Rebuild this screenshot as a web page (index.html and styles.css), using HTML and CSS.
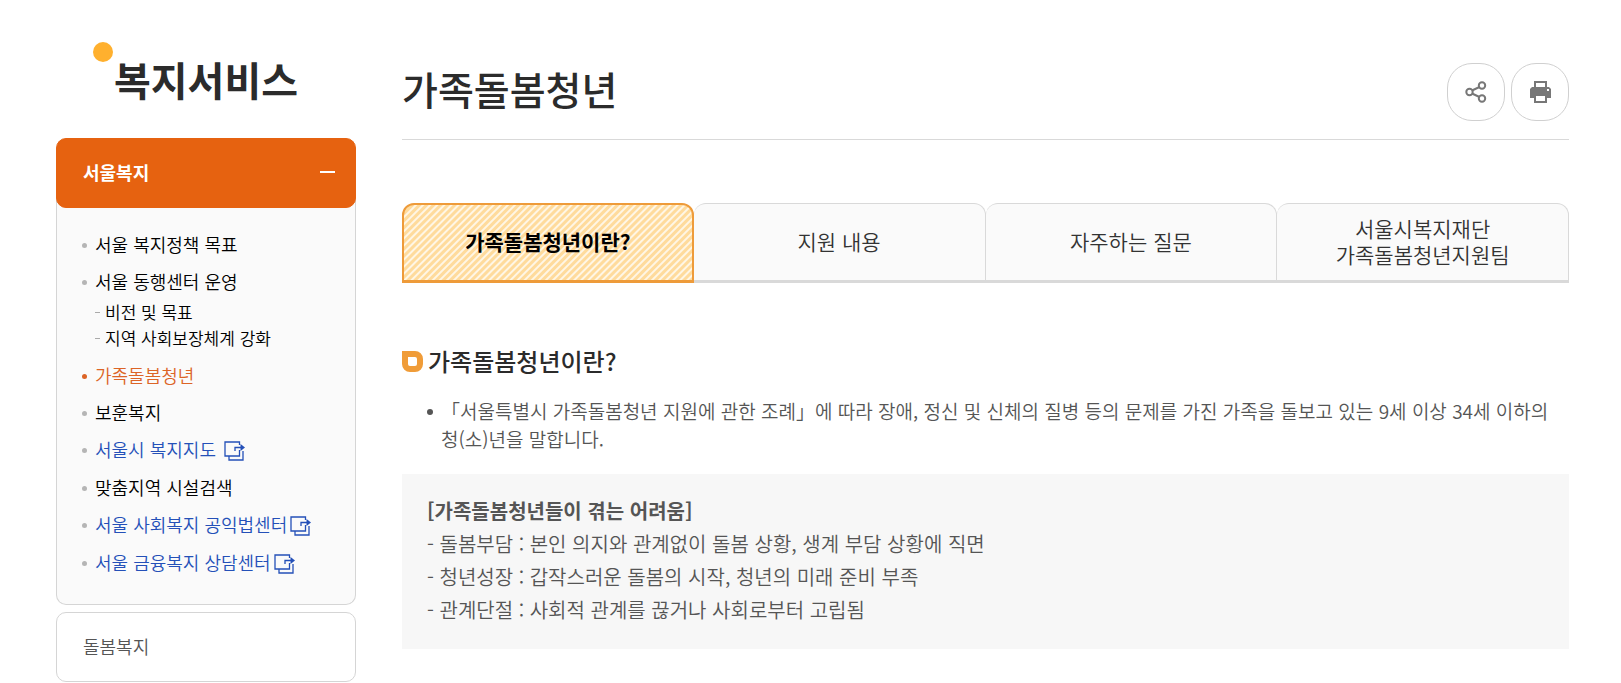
FILE: index.html
```
<!DOCTYPE html>
<html lang="ko">
<head>
    <meta charset="UTF-8">
    <meta name="viewport" content="width=device-width, initial-scale=1.0">
    <title>가족돌봄청년 - 복지서비스</title>
    <link rel="stylesheet" href="styles.css">
</head>
<body>
    <svg class="sprite" width="0" height="0" aria-hidden="true">
        <symbol id="icon-link" viewBox="0 0 21 20">
            <path d="M15.500 4V1H1v14h14.500V9M5 15v4h14v-9M11 10V6.500H18" fill="none" stroke="currentColor" stroke-width="1.300"/>
            <path d="M16.500 3L21 6.500L16.500 10z" fill="currentColor"/>
        </symbol>
    </svg>
    <div class="wrap">
        <aside class="side">
            <h2 class="side-title"><span>복지서비스</span></h2>
            <nav class="lnb">
                <button type="button" class="lnb-btn on" aria-expanded="true">서울복지</button>
                <ul class="lnb-list">
                    <li><a href="#">서울 복지정책 목표</a></li>
                    <li>
                        <a href="#">서울 동행센터 운영</a>
                        <ul class="lnb-sub">
                            <li><a href="#">비전 및 목표</a></li>
                            <li><a href="#">지역 사회보장체계 강화</a></li>
                        </ul>
                    </li>
                    <li class="current"><a href="#">가족돌봄청년</a></li>
                    <li><a href="#">보훈복지</a></li>
                    <li><a href="#" class="blank">서울시 복지지도 <svg class="ico-link"><use href="#icon-link"/></svg></a></li>
                    <li><a href="#">맞춤지역 시설검색</a></li>
                    <li><a href="#" class="blank">서울 사회복지 공익법센터<svg class="ico-link"><use href="#icon-link"/></svg></a></li>
                    <li><a href="#" class="blank">서울 금융복지 상담센터<svg class="ico-link"><use href="#icon-link"/></svg></a></li>
                </ul>
                <button type="button" class="lnb-btn">돌봄복지</button>
            </nav>
        </aside>

        <main class="content">
            <header class="content-head">
                <h1>가족돌봄청년</h1>
                <div class="tools">
                    <button type="button" aria-label="공유">
                        <svg width="22" height="22" viewBox="0 0 22 22" fill="none" stroke="#777" stroke-width="2">
                            <path d="M7 9.500L14.500 6M7 12.500L14.500 16"/>
                            <circle cx="4.500" cy="11" r="3.200"/>
                            <circle cx="17" cy="4.500" r="3.200"/>
                            <circle cx="17" cy="17.500" r="3.200"/>
                        </svg>
                    </button>
                    <button type="button" aria-label="인쇄">
                        <svg width="22" height="22" viewBox="0 0 22 22">
                            <path d="M5 0h13v6h2l2 2v9h-4v5H5v-5H1V8l2-2h2z" fill="#777"/>
                            <path d="M7 2h9v4H7zM7 15h9v5H7zM18 8h2v2h-2z" fill="#fff"/>
                        </svg>
                    </button>
                </div>
            </header>

            <ul class="tabs">
                <li class="on"><a href="#">가족돌봄청년이란?</a></li>
                <li><a href="#">지원 내용</a></li>
                <li><a href="#">자주하는 질문</a></li>
                <li><a href="#">서울시복지재단<br>가족돌봄청년지원팀</a></li>
            </ul>

            <h3 class="tit">가족돌봄청년이란?</h3>
            <ul class="bullet">
                <li>「서울특별시 가족돌봄청년 지원에 관한 조례」에 따라 장애, 정신 및 신체의 질병 등의 문제를 가진 가족을 돌보고 있는 9세 이상 34세 이하의 청(소)년을 말합니다.</li>
            </ul>
            <div class="gray-box">
                <strong>[가족돌봄청년들이 겪는 어려움]</strong>
                <p>- 돌봄부담 : 본인 의지와 관계없이 돌봄 상황, 생계 부담 상황에 직면</p>
                <p>- 청년성장 : 갑작스러운 돌봄의 시작, 청년의 미래 준비 부족</p>
                <p>- 관계단절 : 사회적 관계를 끊거나 사회로부터 고립됨</p>
            </div>
        </main>
    </div>
</body>
</html>
```
FILE: styles.css
```
*, *::before, *::after {
    box-sizing: border-box;
}
body, h1, h2, h3, p, ul {
    margin: 0;
    padding: 0;
}
body {
    font-family: "Noto Sans CJK KR", sans-serif;
    font-size: 19px;
    font-weight: 350;
    color: #555;
    background: #fff;
}
ul {
    list-style: none;
}
a {
    color: inherit;
    text-decoration: none;
}
button {
    font: inherit;
    cursor: pointer;
}
.sprite {
    display: block;
}
.wrap {
    display: flex;
    gap: 46px;
    padding: 0 52px 0 56px;
}

/* 왼쪽 메뉴 */
.side {
    flex: 0 0 300px;
}
.side-title {
    height: 138px;
    padding: 49px 0 0 58px;
    font-size: 40px;
    line-height: 60px;
    font-weight: 700;
    color: #2b2b2b;
}
.side-title span {
    position: relative;
}
.side-title span::before {
    content: "";
    position: absolute;
    top: -8px;
    left: -21px;
    width: 20px;
    height: 20px;
    border-radius: 50%;
    background: #ffb02e;
}
.lnb-btn {
    display: flex;
    justify-content: space-between;
    align-items: center;
    width: 100%;
    height: 70px;
    padding: 0 20px 2px 26px;
    border: 1px solid #d5d5d5;
    border-radius: 10px;
    background: #fff;
    color: #555;
    font-size: 18px;
}
.lnb-btn.on {
    position: relative;
    border-color: #e66210;
    background: #e66210;
    color: #fff;
    font-weight: 700;
}
.lnb-btn.on::after {
    content: "";
    width: 15px;
    height: 2px;
    background: #fff;
}
.lnb-list {
    margin: -10px 0 7px;
    padding: 28px 12px 22px 25px;
    border: 1px solid #d5d5d5;
    border-top: 0;
    border-radius: 0 0 10px 10px;
    background: #fafafa;
    color: #000;
    font-size: 18px;
    line-height: 25px;
}
.lnb-list > li {
    position: relative;
    padding: 6px 0 6px 13px;
}
.lnb-list > li::before {
    content: "";
    position: absolute;
    top: 17px;
    left: 0;
    width: 5px;
    height: 5px;
    border-radius: 50%;
    background: #b5b5b5;
}
.lnb-list > .current {
    color: #dc6426;
}
.lnb-list > .current::before {
    background: #dc6426;
}
.lnb-list .blank {
    display: block;
    height: 26px;
    color: #2450b8;
}
.ico-link {
    width: 21px;
    height: 20px;
    margin-left: 3px;
    vertical-align: -4px;
}
.lnb-sub {
    padding-top: 5px;
    font-size: 17px;
}
.lnb-sub li {
    display: flex;
    align-items: center;
    gap: 5px;
    line-height: 26px;
}
.lnb-sub li::before {
    content: "";
    width: 5px;
    height: 1px;
    background: #aaa;
}

/* 본문 */
.content {
    flex: 1;
    min-width: 0;
}
.content-head {
    display: flex;
    justify-content: space-between;
    height: 140px;
    padding-top: 58px;
    border-bottom: 1px solid #d9d9d9;
}
.content-head h1 {
    font-size: 39px;
    line-height: 60px;
    font-weight: 500;
    color: #2b2b2b;
}
.tools {
    display: flex;
    gap: 6px;
    padding-top: 5px;
}
.tools button {
    display: flex;
    justify-content: center;
    align-items: center;
    width: 58px;
    height: 58px;
    padding: 0;
    border: 1px solid #d0d0d0;
    border-radius: 25px;
    background: #fff;
}
.tabs {
    display: grid;
    grid-template-columns: repeat(4, 1fr);
    margin-top: 63px;
}
.tabs a {
    display: flex;
    justify-content: center;
    align-items: center;
    height: 80px;
    padding-bottom: 3px;
    border: 1px solid #d9d9d9;
    border-left: 0;
    border-bottom: 3px solid #d9d9d9;
    border-radius: 12px 12px 0 0;
    background: #fafafa;
    color: #333;
    font-size: 21px;
    line-height: 26px;
    text-align: center;
}
.tabs .on a {
    border: 2px solid #ee9b3a;
    border-bottom-width: 3px;
    background: repeating-linear-gradient(135deg, #ffdb9c 0 2px, #fff6e5 3px 4px, #ffdb9c 5px);
    color: #000;
    font-weight: 700;
}
.tit {
    display: flex;
    align-items: center;
    gap: 5px;
    margin-top: 60px;
    font-size: 24px;
    line-height: 36px;
    font-weight: 500;
    color: #2b2b2b;
}
.tit::before {
    content: "";
    width: 21px;
    height: 21px;
    border: 6px solid #f09c38;
    border-radius: 0 8px 8px 8px;
    background: #fff;
}
.bullet {
    padding: 18px 0 0 25px;
    line-height: 28px;
}
.bullet li {
    position: relative;
    padding-left: 14px;
}
.bullet li::before {
    content: "";
    position: absolute;
    top: 12px;
    left: 0;
    width: 6px;
    height: 6px;
    border-radius: 50%;
    background: #555;
}
.gray-box {
    margin-top: 21px;
    padding: 20px 25px 23px;
    background: #f7f7f7;
    font-size: 20px;
    line-height: 33px;
}
.gray-box strong {
    display: block;
    font-weight: 700;
}
```
